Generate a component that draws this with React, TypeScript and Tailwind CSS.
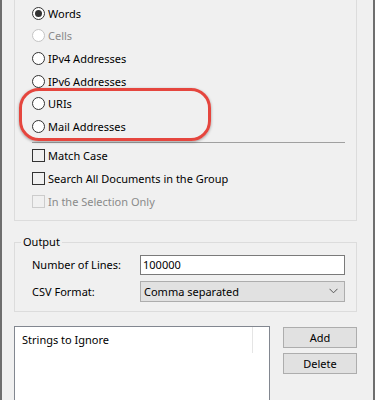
import React from "react";

function Radio({ label, checked, disabled }: { label: string; checked?: boolean; disabled?: boolean }) {
  return (
    <div className="flex items-center h-[22.6px] pl-[17px]">
      <span
        className={
          "w-[13px] h-[13px] rounded-full border flex items-center justify-center bg-white " +
          (disabled ? "border-[#c4c4c4]" : "border-[#333333]")
        }
      >
        {checked && <span className="w-[7px] h-[7px] rounded-full bg-[#333333]" />}
      </span>
      <span className={"ml-[3px] text-[11px] leading-none " + (disabled ? "text-[#8a8a8a]" : "text-black")}>{label}</span>
    </div>
  );
}

function Check({ label, disabled }: { label: string; disabled?: boolean }) {
  return (
    <div className="flex items-center h-[23px] pl-[17px]">
      <span className={"w-[13px] h-[13px] border " + (disabled ? "border-[#cccccc]" : "border-[#333333]")} />
      <span className={"ml-[3px] text-[11px] leading-none " + (disabled ? "text-[#8a8a8a]" : "text-black")}>{label}</span>
    </div>
  );
}

export default function App() {
  return (
    <div className="relative w-[375px] h-[400px] overflow-hidden bg-[#f0f0f0] border-l-2 border-r-2 border-[#6e6e6e] pl-[12px] pr-[16px] font-['Noto_Sans',sans-serif]">
      {/* First group (top cut off) */}
      <div className="border-x border-b border-[#dcdcdc] pt-[2px] pb-[7px]">
        <Radio label="Words" checked />
        <Radio label="Cells" disabled />
        <Radio label="IPv4 Addresses" />
        <Radio label="IPv6 Addresses" />
        <Radio label="URIs" />
        <Radio label="Mail Addresses" />
        <div className="ml-[17px] mr-[11px] mt-[4px] h-px bg-[#a0a0a0]" />
        <div className="pt-[1px]">
          <Check label="Match Case" />
          <Check label="Search All Documents in the Group" />
          <Check label="In the Selection Only" disabled />
        </div>
      </div>

      {/* Output group */}
      <div className="relative mt-[21px] border border-[#dcdcdc] pt-[12px] pb-[9px] pl-[17px] pr-[11px]">
        <span className="absolute left-[6px] -top-[9px] px-[2px] bg-[#f0f0f0] text-[11px] leading-[16px] text-black">
          Output
        </span>
        <div className="flex items-center h-[20px]">
          <span className="w-[108px] text-[11px] leading-none text-black">Number of Lines:</span>
          <div className="flex-1 h-[20px] border border-[#7a7a7a] bg-white flex items-center px-[2px] text-[11px] leading-none text-black">
            100000
          </div>
        </div>
        <div className="flex items-center h-[21px] mt-[6px]">
          <span className="w-[108px] text-[11px] leading-none text-black">CSV Format:</span>
          <div className="flex-1 h-[21px] border border-[#adadad] bg-[#e1e1e1] flex items-center pl-[3px] pr-[6px] text-[11px] leading-none text-black">
            <span className="flex-1">Comma separated</span>
            <svg width="9" height="6" viewBox="0 0 9 6">
              <path d="M0.5 0.8 L4.5 4.8 L8.5 0.8" fill="none" stroke="#555" strokeWidth="1" />
            </svg>
          </div>
        </div>
      </div>

      {/* List and buttons */}
      <div className="flex mt-[14px]">
        <div className="w-[258px] h-[120px] border border-[#828790] bg-white">
          <div className="flex h-[26px]">
            <div className="w-[237px] pl-[7px] flex items-center text-[11px] leading-none text-black">
              Strings to Ignore
            </div>
            <div className="w-px bg-[#e5e5e5]" />
          </div>
        </div>
        <div className="ml-[13px] flex flex-col gap-[5px] pt-[1px]">
          <button className="w-[74px] h-[21px] border border-[#adadad] bg-[#e1e1e1] text-[11px] leading-none text-black">
            Add
          </button>
          <button className="w-[74px] h-[21px] border border-[#adadad] bg-[#e1e1e1] text-[11px] leading-none text-black">
            Delete
          </button>
        </div>
      </div>

      {/* Red annotation */}
      <div className="absolute left-[17px] top-[88px] w-[192px] h-[53px] rounded-[20px] border-[3px] border-[#e5463e] shadow-[0_1px_3px_rgba(0,0,0,0.35)]" />
    </div>
  );
}
